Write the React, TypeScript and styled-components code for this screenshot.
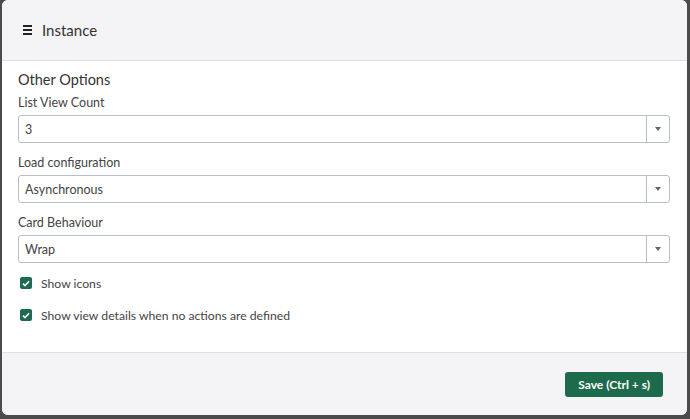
import React from "react";
import styled, { createGlobalStyle } from "styled-components";

const Global = createGlobalStyle`
  html, body { margin: 0; padding: 0; background: #4b4b4b; }
  body { font-family: Lato, "Open Sans", sans-serif; color: #333; }
  * { box-sizing: border-box; }
`;

const Frame = styled.div`
  width: 690px;
  height: 419px;
  padding: 0 3px 4px 2px;
  background: #4b4b4b;
`;

const Modal = styled.div`
  height: 100%;
  background: #fff;
  border-radius: 6px;
  overflow: hidden;
  display: flex;
  flex-direction: column;
`;

const Header = styled.div`
  height: 61px;
  background: #f4f4f6;
  border-bottom: 1px solid #dedfe3;
  display: flex;
  align-items: center;
  padding: 0 0 0 21px;
  gap: 10px;
`;

const Title = styled.h1`
  margin: 0;
  font-size: 15px;
  font-weight: 400;
  color: #333;
  line-height: 1;
`;

const Body = styled.div`
  flex: 1;
  padding: 9px 17px 0 16px;
  display: flex;
  flex-direction: column;
`;

const Section = styled.div`
  font-size: 14.5px;
  color: #333;
  line-height: 20px;
  margin-bottom: 4px;
`;

const Label = styled.div`
  font-size: 12.5px;
  color: #444;
  line-height: 18px;
  margin-bottom: 3px;
`;

const Select = styled.div`
  height: 28px;
  border: 1px solid #b9bdc9;
  border-radius: 3px;
  display: flex;
  align-items: stretch;
  margin-bottom: 11px;
`;

const Value = styled.div`
  flex: 1;
  display: flex;
  align-items: center;
  padding-left: 6px;
  font-size: 12.5px;
  color: #444;
`;

const Arrow = styled.div`
  width: 23px;
  border-left: 1px solid #b9bdc9;
  display: flex;
  align-items: center;
  justify-content: center;
`;

const Checks = styled.div`
  display: flex;
  flex-direction: column;
  gap: 14px;
`;

const CheckRow = styled.label`
  display: flex;
  align-items: center;
  gap: 9px;
  padding-left: 2px;
  font-size: 12.2px;
  color: #444;
  height: 18px;
`;

const Box = styled.span`
  width: 12px;
  height: 12px;
  border-radius: 2px;
  background: #1d6a4c;
  display: flex;
  align-items: center;
  justify-content: center;
`;

const Footer = styled.div`
  height: 63px;
  background: #f4f4f6;
  border-top: 1px solid #dedfe3;
  display: flex;
  align-items: center;
  justify-content: flex-end;
  padding: 0 24px 0 0;
`;

const Button = styled.button`
  height: 25px;
  padding: 0 13px;
  border: none;
  border-radius: 3px;
  background: #1d6a4c;
  color: #fff;
  font-family: Lato, "Open Sans", sans-serif;
  font-weight: 700;
  font-size: 12px;
`;

const Hamburger = () => (
  <svg width="9" height="10" viewBox="0 0 9 10">
    <rect x="0" y="0" width="9" height="2" fill="#222" />
    <rect x="0" y="4" width="9" height="2" fill="#222" />
    <rect x="0" y="8" width="9" height="2" fill="#222" />
  </svg>
);

const Caret = () => (
  <svg width="6" height="4" viewBox="0 0 6 4">
    <path d="M0 0 L6 0 L3 4 Z" fill="#666" />
  </svg>
);

const Tick = () => (
  <svg width="8" height="7" viewBox="0 0 9 8">
    <path d="M1 4.2 L3.4 6.4 L8 1.4" stroke="#fff" strokeWidth="1.8" fill="none" />
  </svg>
);

const Field = ({ label, value }: { label: string; value: string }) => (
  <>
    <Label>{label}</Label>
    <Select>
      <Value>{value}</Value>
      <Arrow>
        <Caret />
      </Arrow>
    </Select>
  </>
);

export default function App() {
  return (
    <>
      <Global />
      <Frame>
        <Modal>
          <Header>
            <Hamburger />
            <Title>Instance</Title>
          </Header>
          <Body>
            <Section>Other Options</Section>
            <Field label="List View Count" value="3" />
            <Field label="Load configuration" value="Asynchronous" />
            <Field label="Card Behaviour" value="Wrap" />
            <Checks>
              <CheckRow>
                <Box><Tick /></Box>
                Show icons
              </CheckRow>
              <CheckRow>
                <Box><Tick /></Box>
                Show view details when no actions are defined
              </CheckRow>
            </Checks>
          </Body>
          <Footer>
            <Button>Save (Ctrl + s)</Button>
          </Footer>
        </Modal>
      </Frame>
    </>
  );
}
